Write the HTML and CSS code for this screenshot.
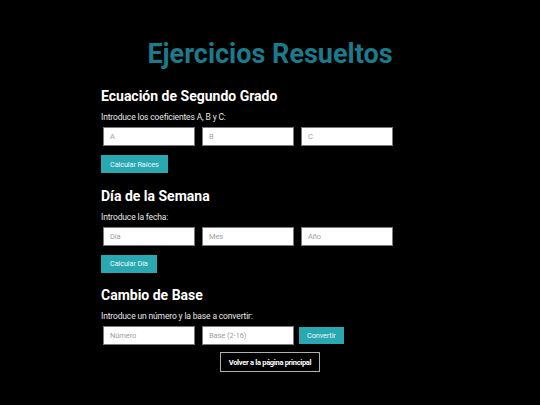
FILE: index.html
```html
<!DOCTYPE html>
<html lang="es">
<head>
<meta charset="utf-8">
<title>Ejercicios Resueltos</title>
<link rel="stylesheet" href="styles.css">
</head>
<body>
<main class="page">
  <h1 class="title">Ejercicios Resueltos</h1>

  <section class="exercise">
    <h2 class="ex-title">Ecuación de Segundo Grado</h2>
    <p class="ex-text">Introduce los coeficientes A, B y C:</p>
    <div class="row">
      <input class="field" type="text" placeholder="A">
      <input class="field" type="text" placeholder="B">
      <input class="field" type="text" placeholder="C">
    </div>
    <button class="btn">Calcular Raíces</button>
  </section>

  <section class="exercise">
    <h2 class="ex-title">Día de la Semana</h2>
    <p class="ex-text">Introduce la fecha:</p>
    <div class="row">
      <input class="field" type="text" placeholder="Día">
      <input class="field" type="text" placeholder="Mes">
      <input class="field" type="text" placeholder="Año">
    </div>
    <button class="btn">Calcular Día</button>
  </section>

  <section class="exercise last">
    <h2 class="ex-title">Cambio de Base</h2>
    <p class="ex-text">Introduce un número y la base a convertir:</p>
    <div class="row">
      <input class="field" type="text" placeholder="Número">
      <input class="field" type="text" placeholder="Base (2-16)">
      <button class="btn btn-inline">Convertir</button>
    </div>
  </section>

  <div class="back-wrap">
    <button class="back">Volver a la página principal</button>
  </div>
</main>
</body>
</html>
```

FILE: styles.css
```css
html, body {
  margin: 0;
  padding: 0;
  background: #000;
}
body {
  font-family: Roboto, "Liberation Sans", Arial, sans-serif;
  color: #fff;
  width: 540px;
  height: 405px;
  overflow: hidden;
}
.page {
  width: 338px;
  margin: 0 auto;
  padding-top: 38px;
}
.title {
  margin: 0;
  font-size: 27px;
  line-height: 32px;
  font-weight: 700;
  color: #1b7a8b;
  text-align: center;
}
.exercise {
  margin-top: 18px;
}
.exercise + .exercise {
  margin-top: 14.5px;
}
.ex-title {
  margin: 0;
  font-size: 14px;
  line-height: 17px;
  font-weight: 700;
}
.ex-text {
  margin: 7px 0 0;
  font-size: 8.5px;
  line-height: 10px;
  letter-spacing: -0.15px;
  color: #e6e6e6;
}
.row {
  display: flex;
  align-items: center;
  gap: 7px;
  margin: 5px 0 0 2px;
}
.field {
  box-sizing: border-box;
  width: 92px;
  height: 19px;
  margin: 0;
  padding: 0 6px;
  border: 1px solid #7a7a7a;
  background: #fff;
  font-family: inherit;
  font-size: 7.5px;
  letter-spacing: -0.1px;
  color: #333;
  outline: none;
}
.field::placeholder {
  color: #a0a0a0;
}
.btn {
  display: block;
  box-sizing: border-box;
  height: 18px;
  margin: 9px 0 0;
  padding: 0 9px;
  border: none;
  background: #2aa8b2;
  color: #eaf7f8;
  font-family: inherit;
  font-size: 7.3px;
  letter-spacing: -0.1px;
}
.btn-inline {
  margin: 0 0 0 -2px;
  height: 17px;
  padding: 0 8px;
}
.back-wrap {
  display: flex;
  justify-content: center;
  margin-top: 7px;
}
.back {
  box-sizing: border-box;
  width: 100px;
  height: 20px;
  padding: 0;
  border: 1px solid #b0b0b0;
  background: #000;
  color: #fff;
  font-family: inherit;
  font-size: 7.5px;
  letter-spacing: -0.3px;
  font-weight: 700;
}
```
